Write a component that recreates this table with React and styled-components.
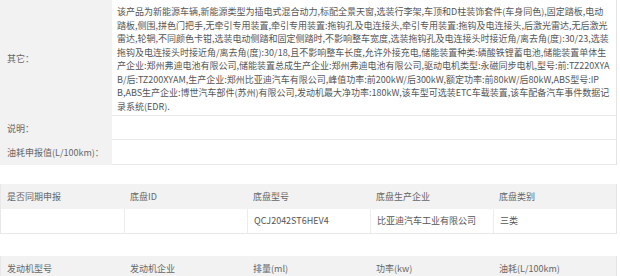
import React from 'react';
import styled, { createGlobalStyle } from 'styled-components';

const GlobalStyle = createGlobalStyle`
  body {
    margin: 0;
    background: #fff;
    font-family: "Noto Sans CJK SC", "Noto Sans", sans-serif;
    font-size: 9px;
    color: #555;
  }
`;

const Page = styled.div`
  width: 617px;
  display: flex;
  flex-direction: column;
`;

const InfoTable = styled.div`
  display: grid;
  grid-template-columns: 112px 1fr;
  border-right: 1px solid #e3e3e3;
`;

const Label = styled.div`
  background: #f2f2f2;
  color: #666;
  padding-left: 7px;
  display: flex;
  align-items: center;
  height: ${p => p.$h}px;
`;

const Value = styled.div`
  border-bottom: 1px solid #e8e8e8;
  padding: ${p => (p.$text ? '5px 5px 2px' : '0 5px')};
  line-height: 13.5px;
  height: ${p => p.$h}px;
  box-sizing: border-box;
`;

const Line = styled.div`
  white-space: nowrap;
`;

const Grid = styled.div`
  display: grid;
  grid-template-columns: repeat(5, 1fr);
  border-left: 1px solid #e8e8e8;
  border-right: 1px solid #e3e3e3;
  margin-top: ${p => p.$gap}px;
`;

const Cell = styled.div`
  height: ${p => (p.$head ? 25 : 24)}px;
  line-height: ${p => (p.$head ? 25 : 24)}px;
  padding-left: 6px;
  white-space: nowrap;
  background: ${p => (p.$head ? '#f2f2f2' : '#fff')};
  color: ${p => (p.$head ? '#666' : '#555')};
  border-bottom: ${p => (p.$head ? 'none' : '1px solid #e8e8e8')};
  border-left: ${p => (p.$head || p.$first ? 'none' : '1px solid #ececec')};
`;

const otherLines = [
  '该产品为新能源车辆,新能源类型为插电式混合动力,标配全景天窗,选装行李架,车顶和D柱装饰套件(车身同色),固定踏板,电动',
  '踏板,侧围,拼色门把手,无牵引专用装置,牵引专用装置:拖钩孔及电连接头,牵引专用装置:拖钩及电连接头,后激光雷达,无后激光',
  '雷达,轮辋,不同颜色卡钳,选装电动侧踏和固定侧踏时,不影响整车宽度,选装拖钩孔及电连接头时接近角/离去角(度):30/23,选装',
  '拖钩及电连接头时接近角/离去角(度):30/18,且不影响整车长度,允许外接充电,储能装置种类:磷酸铁锂蓄电池,储能装置单体生',
  '产企业:郑州弗迪电池有限公司,储能装置总成生产企业:郑州弗迪电池有限公司,驱动电机类型:永磁同步电机,型号:前:TZ220XYA',
  'B/后:TZ200XYAM,生产企业:郑州比亚迪汽车有限公司,峰值功率:前200kW/后300kW,额定功率:前80kW/后80kW,ABS型号:IP',
  'B,ABS生产企业:博世汽车部件(苏州)有限公司,发动机最大净功率:180kW,该车型可选装ETC车载装置,该车配备汽车事件数据记',
  '录系统(EDR).',
];

const chassisHead = ['是否同期申报', '底盘ID', '底盘型号', '底盘生产企业', '底盘类别'];
const chassisRow = ['', '', 'QCJ2042ST6HEV4', '比亚迪汽车工业有限公司', '三类'];
const engineHead = ['发动机型号', '发动机企业', '排量(ml)', '功率(kw)', '油耗(L/100km)'];
const engineRow = ['', '', '', '', ''];

const DataGrid = ({ head, row, gap }) => (
  <Grid $gap={gap}>
    {head.map(h => <Cell key={h} $head>{h}</Cell>)}
    {row.map((v, i) => <Cell key={i} $first={i === 0}>{v}</Cell>)}
  </Grid>
);

const App = () => (
  <Page>
    <GlobalStyle />
    <InfoTable>
      <Label $h={116}>其它：</Label>
      <Value $h={116} $text>
        {otherLines.map((l, i) => <Line key={i}>{l}</Line>)}
      </Value>
      <Label $h={24}>说明：</Label>
      <Value $h={24} />
      <Label $h={25}>油耗申报值(L/100km)：</Label>
      <Value $h={25} />
    </InfoTable>
    <DataGrid head={chassisHead} row={chassisRow} gap={19} />
    <DataGrid head={engineHead} row={engineRow} gap={22} />
  </Page>
);

export default App;
